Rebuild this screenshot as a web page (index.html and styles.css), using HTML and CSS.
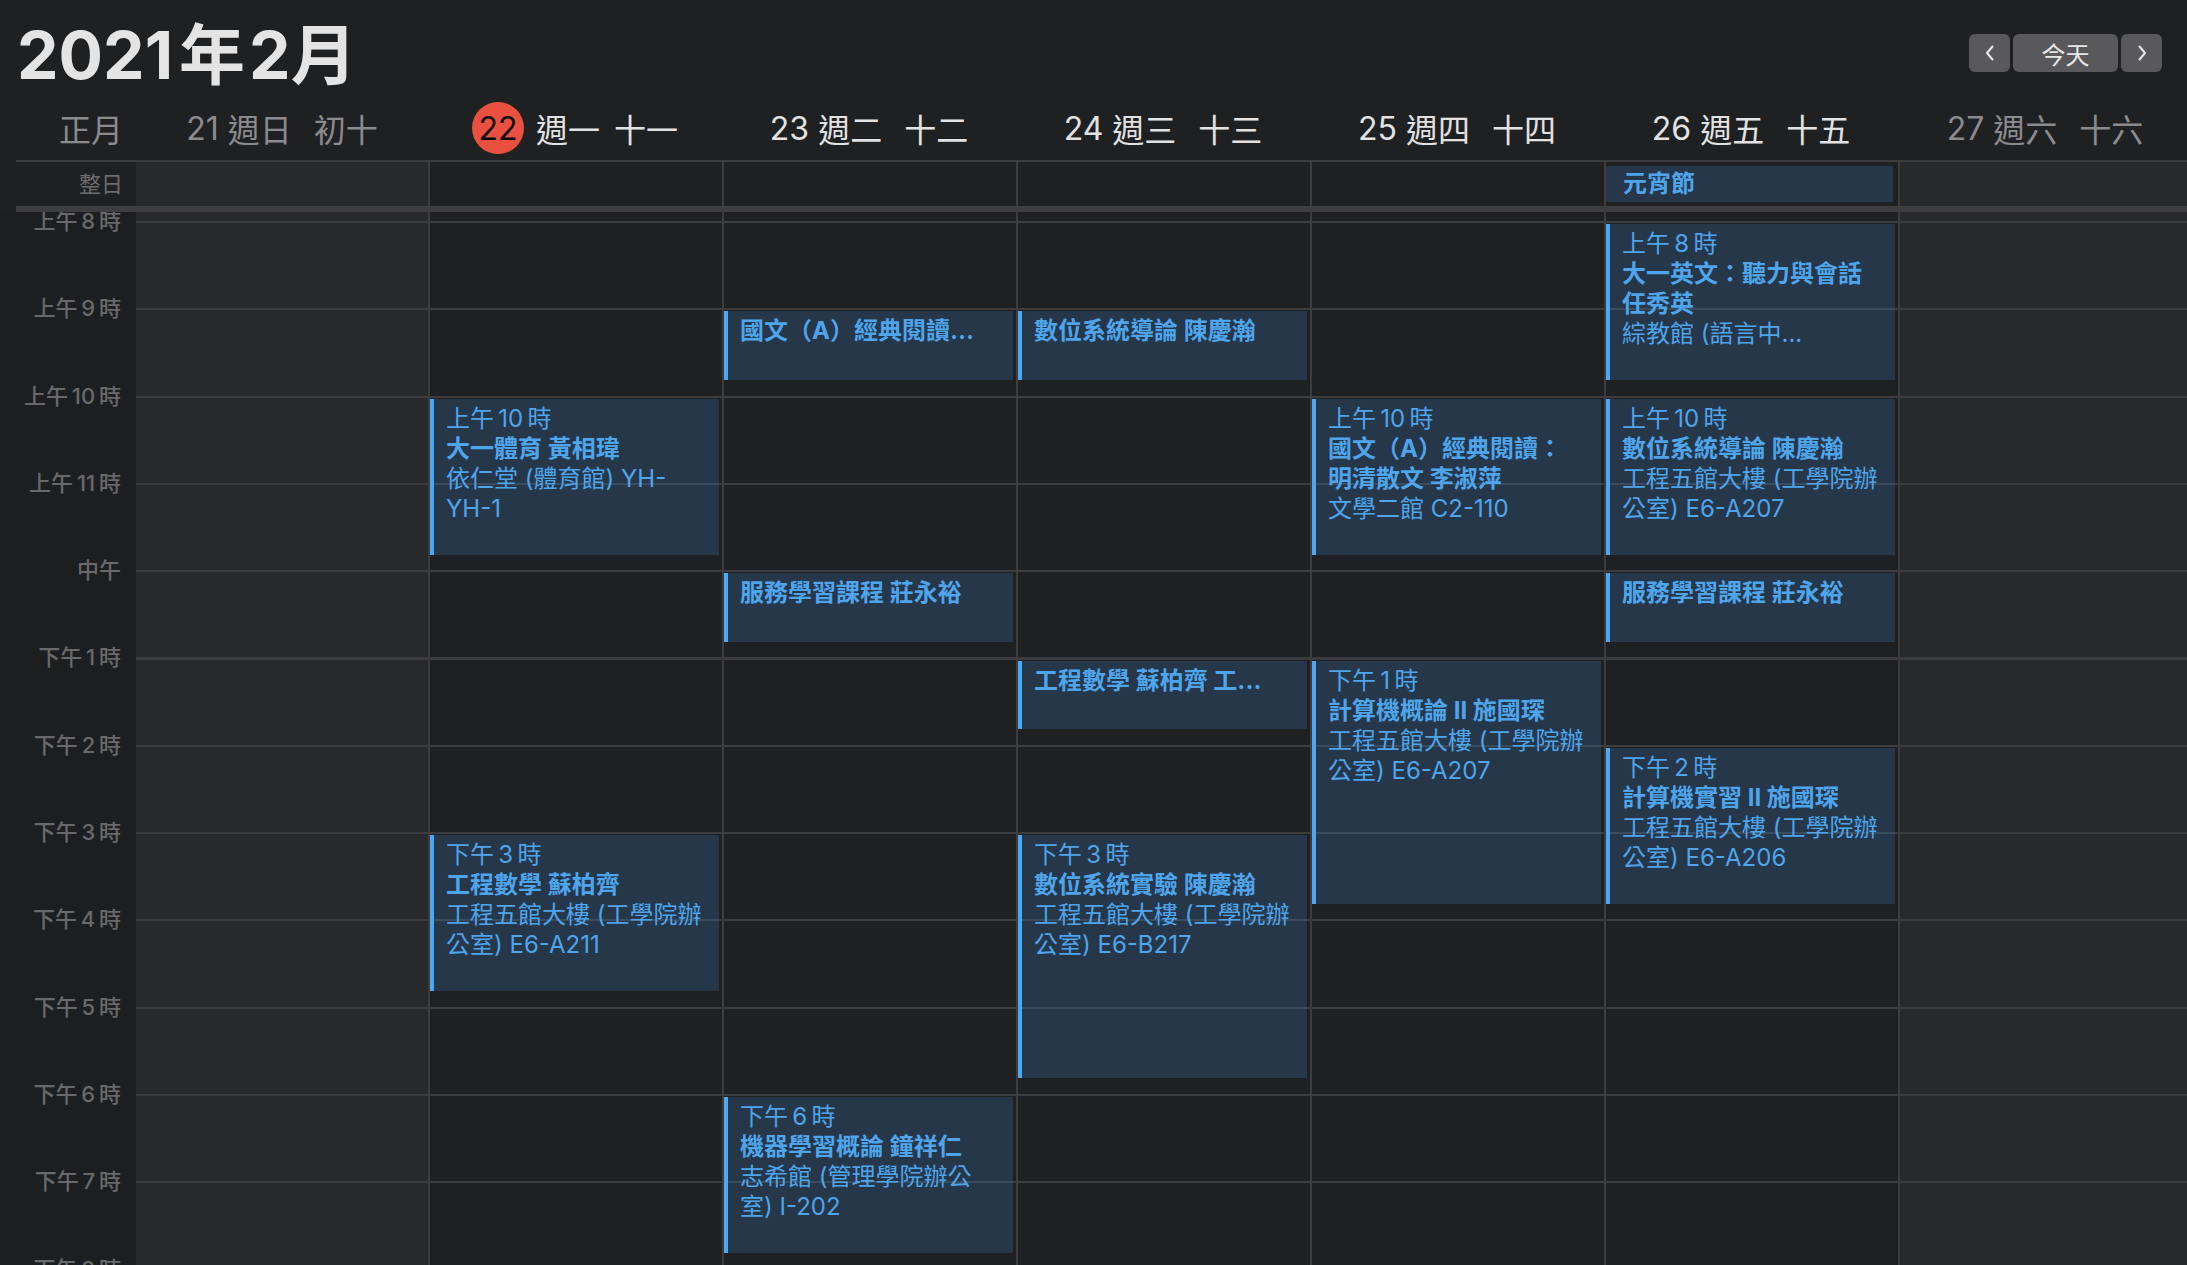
FILE: index.html
```html
<!DOCTYPE html>
<html lang="zh-Hant">
<head>
    <meta charset="UTF-8">
    <meta name="viewport" content="width=device-width, initial-scale=1.0">
    <title>行事曆</title>
    <link rel="stylesheet" href="styles.css">
</head>
<body>
    <div class="calendar">
        <header class="top-bar">
            <h1 class="month-title">2021<span class="cjk">年</span>2<span class="cjk-end">月</span></h1>
            <div class="nav">
                <button class="nav-btn arrow" aria-label="上一週">
                    <svg width="12" height="18" viewBox="0 0 12 18"><path d="M8.5 2.5 L3 9 L8.5 15.5" /></svg>
                </button>
                <button class="nav-btn today-btn">今天</button>
                <button class="nav-btn arrow" aria-label="下一週">
                    <svg width="12" height="18" viewBox="0 0 12 18"><path d="M3.5 2.5 L9 9 L3.5 15.5" /></svg>
                </button>
            </div>
        </header>

        <div class="week-head">
            <div class="lunar-month">正月</div>
            <div class="day-name weekend"><span class="date">21</span>週日<span class="lunar">初十</span></div>
            <div class="day-name"><span class="date today">22</span>週一<span class="lunar">十一</span></div>
            <div class="day-name"><span class="date">23</span>週二<span class="lunar">十二</span></div>
            <div class="day-name"><span class="date">24</span>週三<span class="lunar">十三</span></div>
            <div class="day-name"><span class="date">25</span>週四<span class="lunar">十四</span></div>
            <div class="day-name"><span class="date">26</span>週五<span class="lunar">十五</span></div>
            <div class="day-name weekend"><span class="date">27</span>週六<span class="lunar">十六</span></div>
        </div>

        <div class="allday-row">
            <div class="allday-label">整日</div>
            <div class="cell weekend"></div>
            <div class="cell"></div>
            <div class="cell"></div>
            <div class="cell"></div>
            <div class="cell"></div>
            <div class="cell"><div class="allday-event">元宵節</div></div>
            <div class="cell weekend"></div>
        </div>

        <div class="timeline">
            <div class="hours">
                <div class="hour"><span>上午&thinsp;8&thinsp;時</span></div>
                <div class="hour"><span>上午&thinsp;9&thinsp;時</span></div>
                <div class="hour"><span>上午&thinsp;10&thinsp;時</span></div>
                <div class="hour"><span>上午&thinsp;11&thinsp;時</span></div>
                <div class="hour"><span>中午</span></div>
                <div class="hour"><span>下午&thinsp;1&thinsp;時</span></div>
                <div class="hour"><span>下午&thinsp;2&thinsp;時</span></div>
                <div class="hour"><span>下午&thinsp;3&thinsp;時</span></div>
                <div class="hour"><span>下午&thinsp;4&thinsp;時</span></div>
                <div class="hour"><span>下午&thinsp;5&thinsp;時</span></div>
                <div class="hour"><span>下午&thinsp;6&thinsp;時</span></div>
                <div class="hour"><span>下午&thinsp;7&thinsp;時</span></div>
                <div class="hour"><span>下午&thinsp;8&thinsp;時</span></div>
            </div>
            <div class="day weekend"></div>
            <div class="day"></div>
            <div class="day"></div>
            <div class="day"></div>
            <div class="day"></div>
            <div class="day"></div>
            <div class="day weekend"></div>
        </div>
    </div>

    <script>
        const HOUR = 87.3;      // px per hour
        const FIRST_HOUR = 8;   // hour at the first line
        const TOP_OFFSET = 9;   // first line sits 9px below the fold
        const THIN = "\u2009";

        const events = [
            { day: 1, start: "10:00", end: "11:50", title: ["大一體育 黃相瑋"], place: ["依仁堂 (體育館) YH-", "YH-1"] },
            { day: 1, start: "15:00", end: "16:50", title: ["工程數學 蘇柏齊"], place: ["工程五館大樓 (工學院辦", "公室) E6-A211"] },
            { day: 2, start: "09:00", end: "09:50", title: ["國文（A）經典閱讀..."], place: [] },
            { day: 2, start: "12:00", end: "12:50", title: ["服務學習課程 莊永裕"], place: [] },
            { day: 2, start: "18:00", end: "19:50", title: ["機器學習概論 鐘祥仁"], place: ["志希館 (管理學院辦公", "室) I-202"] },
            { day: 3, start: "09:00", end: "09:50", title: ["數位系統導論 陳慶瀚"], place: [] },
            { day: 3, start: "13:00", end: "13:50", title: ["工程數學 蘇柏齊  工..."], place: [] },
            { day: 3, start: "15:00", end: "17:50", title: ["數位系統實驗 陳慶瀚"], place: ["工程五館大樓 (工學院辦", "公室) E6-B217"] },
            { day: 4, start: "10:00", end: "11:50", title: ["國文（A）經典閱讀：", "明清散文 李淑萍"], place: ["文學二館 C2-110"] },
            { day: 4, start: "13:00", end: "15:50", title: ["計算機概論 II 施國琛"], place: ["工程五館大樓 (工學院辦", "公室) E6-A207"] },
            { day: 5, start: "08:00", end: "09:50", title: ["大一英文：聽力與會話", "任秀英"], place: ["綜教館 (語言中..."] },
            { day: 5, start: "10:00", end: "11:50", title: ["數位系統導論 陳慶瀚"], place: ["工程五館大樓 (工學院辦", "公室) E6-A207"] },
            { day: 5, start: "12:00", end: "12:50", title: ["服務學習課程 莊永裕"], place: [] },
            { day: 5, start: "14:00", end: "15:50", title: ["計算機實習 II 施國琛"], place: ["工程五館大樓 (工學院辦", "公室) E6-A206"] },
        ];

        function toHours(time) {
            const [h, m] = time.split(":").map(Number);
            return h + m / 60;
        }

        function timeLabel(time) {
            const h = Number(time.split(":")[0]);
            if (h < 12) return `上午${THIN}${h}${THIN}時`;
            if (h === 12) return "中午";
            return `下午${THIN}${h - 12}${THIN}時`;
        }

        function renderEvents() {
            const columns = document.querySelectorAll(".timeline .day");
            events.forEach(event => {
                const start = toHours(event.start);
                const length = toHours(event.end) - start;
                const item = document.createElement("div");
                item.classList.add("event");
                item.style.top = (TOP_OFFSET + (start - FIRST_HOUR) * HOUR + 3) + "px";
                item.style.height = (length * HOUR - 4) + "px";

                let html = "";
                if (length > 1) html += `<div class="line">${timeLabel(event.start)}</div>`;
                event.title.forEach(t => html += `<div class="line title">${t}</div>`);
                event.place.forEach(p => html += `<div class="line">${p}</div>`);
                item.innerHTML = html;

                columns[event.day].appendChild(item);
            });
        }

        renderEvents();
    </script>
</body>
</html>
```

FILE: styles.css
```css
html, body {
    margin: 0;
    padding: 0;
    background: #1f2022;
    overflow: hidden;
}
body {
    font-family: Inter, "Noto Sans CJK TC", sans-serif;
    color: #dedede;
}
.calendar {
    width: 2187px;
    height: 1265px;
    overflow: hidden;
}

/* title bar */
.top-bar {
    display: flex;
    justify-content: space-between;
    align-items: flex-start;
    height: 96px;
}
.month-title {
    margin: 0;
    padding: 22px 0 0 17px;
    font-size: 66px;
    line-height: 66px;
    font-weight: 700;
    color: #e4e4e4;
}
.month-title .cjk {
    margin: 0 4px 0 6px;
}
.nav {
    display: flex;
    gap: 3px;
    margin: 34px 25px 0 0;
}
.nav-btn {
    height: 38px;
    border: none;
    border-radius: 6px;
    background: #59595c;
    color: #e8e8e8;
    font-family: inherit;
    font-size: 24px;
    padding: 0;
    display: flex;
    align-items: center;
    justify-content: center;
}
.nav-btn.arrow {
    width: 41px;
}
.nav-btn.today-btn {
    width: 105px;
}
.nav-btn svg path {
    fill: none;
    stroke: #e8e8e8;
    stroke-width: 2;
    stroke-linecap: round;
    stroke-linejoin: round;
}

/* day names */
.week-head {
    display: grid;
    grid-template-columns: 120px 292px repeat(6, 294px);
    height: 64px;
    margin-left: 16px;
    border-bottom: 2px solid #3c3c3e;
    align-items: center;
    font-size: 32px;
}
.lunar-month {
    text-align: right;
    padding-right: 13px;
    color: #8b8b8e;
}
.day-name {
    display: flex;
    justify-content: center;
    align-items: center;
    color: #e2e2e2;
    white-space: nowrap;
}
.day-name.weekend {
    color: #8b8b8e;
}
.day-name .date {
    margin-right: 9px;
}
.day-name .date.today {
    width: 52px;
    height: 52px;
    border-radius: 50%;
    background: #e9503f;
    color: #0c0c0c;
    display: flex;
    align-items: center;
    justify-content: center;
    margin-right: 12px;
}
.day-name .lunar {
    margin-left: 22px;
}
.day-name .today ~ .lunar {
    margin-left: 14px;
}

/* all-day row */
.allday-row {
    display: grid;
    grid-template-columns: 120px 292px repeat(6, 294px);
    height: 44px;
    margin-left: 16px;
    border-bottom: 6px solid #3e3e40;
}
.allday-label {
    text-align: right;
    padding-right: 13px;
    font-size: 22px;
    line-height: 44px;
    color: #6c6c6f;
}
.cell {
    border-left: 2px solid #3c3c3e;
}
.allday-label + .cell {
    border-left: none;
}
.cell.weekend {
    background: #28292b;
}
.allday-event {
    margin: 4px 5px 0 0;
    height: 36px;
    line-height: 36px;
    padding-left: 17px;
    background: rgba(55, 124, 190, 0.25);
    color: #4fa5ec;
    font-size: 24px;
    font-weight: 700;
}

/* hourly grid */
.timeline {
    display: grid;
    grid-template-columns: 136px 292px repeat(6, 294px);
    height: 1053px;
    overflow: hidden;
}
.hours {
    background: #1d1e20;
    padding-top: 9px;
    overflow: hidden;
}
.hour {
    height: 87.3px;
    text-align: right;
    padding-right: 15px;
}
.hour span {
    display: block;
    transform: translateY(-50%);
    font-size: 22px;
    line-height: 26px;
    font-weight: 500;
    color: #69696c;
    white-space: nowrap;
}
.day {
    position: relative;
    border-left: 2px solid #3c3c3e;
    background-image: repeating-linear-gradient(to bottom, #3c3c3e 0, #3c3c3e 2px, transparent 2px, transparent 87.3px);
    background-position: 0 9px;
    background-repeat: no-repeat;
}
.hours + .day {
    border-left: none;
}
.day.weekend {
    background-color: #28292b;
}
.event {
    position: absolute;
    left: 0;
    right: 3px;
    box-sizing: border-box;
    padding: 5px 6px 0 12px;
    border-left: 4px solid #4aa8f5;
    background: rgba(55, 124, 190, 0.25);
    color: #4fa5ec;
    font-size: 24px;
    overflow: hidden;
}
.event .line {
    line-height: 30px;
    white-space: nowrap;
    overflow: hidden;
}
.event .title {
    font-weight: 700;
}
```
